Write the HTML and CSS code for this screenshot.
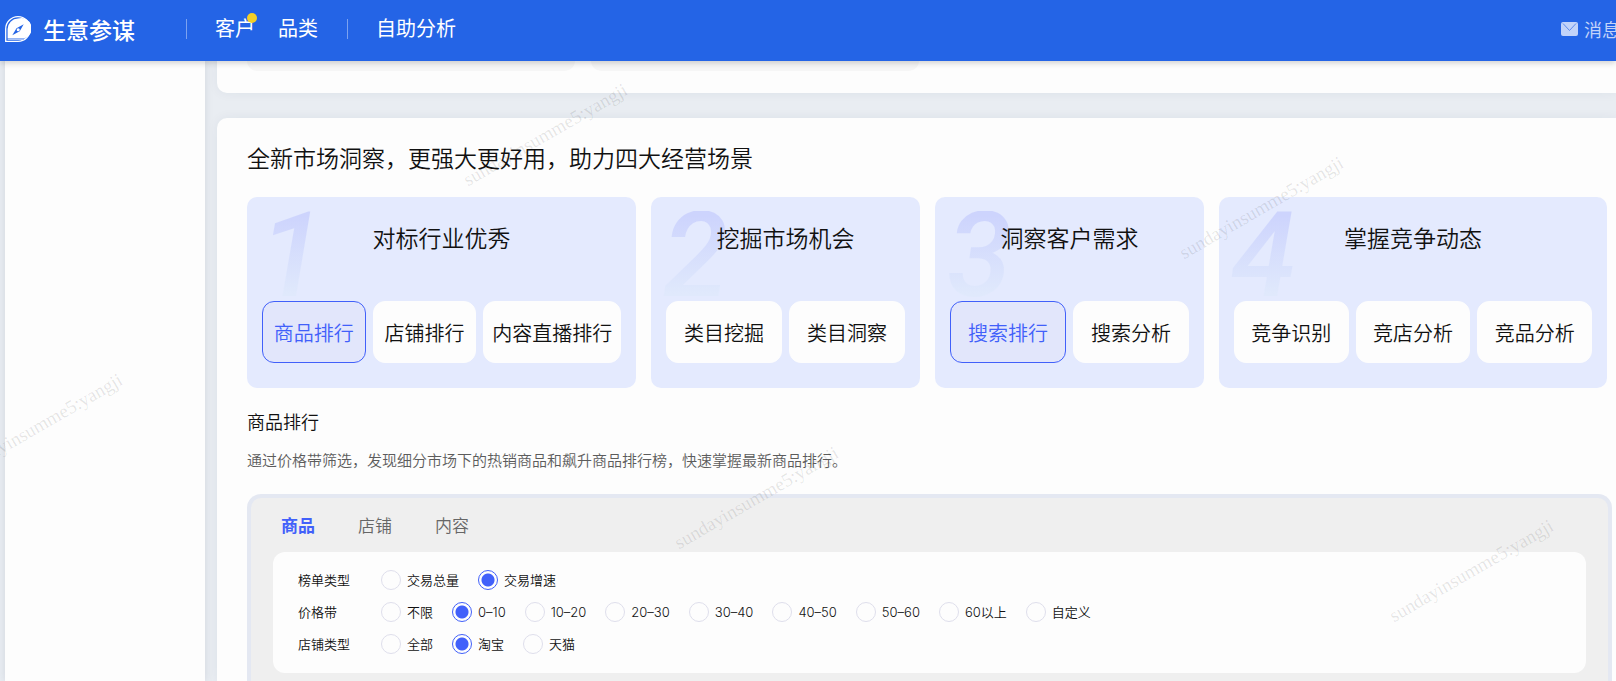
FILE: index.html
```html
<!DOCTYPE html>
<html lang="zh-CN">
<head>
<meta charset="utf-8">
<meta name="viewport" content="width=device-width, initial-scale=1">
<title>生意参谋</title>
<link rel="stylesheet" href="styles.css">
</head>
<body>
<div class="page">
  <header class="topbar">
    <a class="brand" href="#">
      <svg class="brand-logo" viewBox="0 0 26 26" aria-hidden="true">
        <path d="M13 .7A12.3 12.3 0 1 1 13 25.300H.7V13A12.300 12.300 0 0 1 13 .7Z" fill="none" stroke="#fff" stroke-width="1.300"/>
        <path d="M13 2.600A10.400 10.400 0 0 1 19.500 22.400H2.600V13A10.400 10.400 0 0 1 13 2.600Z" fill="#fff"/>
        <path d="M2.600 22.800H19V24H2.600Z" fill="#a9c2f6"/>
        <path d="M18.700 8.200 14.700 15.300 7.300 19.300 11.500 12.300Z" fill="#2464e6"/>
        <circle cx="13.200" cy="13.800" r="1.500" fill="#fff"/>
      </svg>
      <span>生意参谋</span>
    </a>
    <nav class="topnav">
      <span class="divider"></span>
      <a class="nav-link has-dot" href="#">客户</a>
      <a class="nav-link" href="#">品类</a>
      <span class="divider"></span>
      <a class="nav-link" href="#">自助分析</a>
    </nav>
    <a class="message" href="#">
      <svg class="message-icon" viewBox="0 0 17 14" aria-hidden="true">
        <rect width="17" height="14" rx="2" fill="#c2d3f9"/>
        <path d="M2 1.500 8.500 8.500 15 1.500" fill="none" stroke="#5c8aee" stroke-width="1"/>
      </svg>
      <span>消息</span>
    </a>
  </header>

  <div class="body">
    <aside class="sidebar"></aside>
    <main class="content">
      <section class="card previous">
        <div class="placeholder"></div>
        <div class="placeholder"></div>
      </section>

      <section class="card insight">
        <h1 class="headline">全新市场洞察，更强大更好用，助力四大经营场景</h1>
        <div class="scenes">
          <article class="scene">
            <span class="scene-no">1</span>
            <h2 class="scene-title">对标行业优秀</h2>
            <div class="scene-actions">
              <button class="action short active" type="button">商品排行</button>
              <button class="action short" type="button">店铺排行</button>
              <button class="action long" type="button">内容直播排行</button>
            </div>
          </article>
          <article class="scene">
            <span class="scene-no">2</span>
            <h2 class="scene-title">挖掘市场机会</h2>
            <div class="scene-actions">
              <button class="action" type="button">类目挖掘</button>
              <button class="action" type="button">类目洞察</button>
            </div>
          </article>
          <article class="scene">
            <span class="scene-no">3</span>
            <h2 class="scene-title">洞察客户需求</h2>
            <div class="scene-actions">
              <button class="action active" type="button">搜索排行</button>
              <button class="action" type="button">搜索分析</button>
            </div>
          </article>
          <article class="scene">
            <span class="scene-no">4</span>
            <h2 class="scene-title">掌握竞争动态</h2>
            <div class="scene-actions">
              <button class="action" type="button">竞争识别</button>
              <button class="action" type="button">竞店分析</button>
              <button class="action" type="button">竞品分析</button>
            </div>
          </article>
        </div>

        <h3 class="subhead">商品排行</h3>
        <p class="description">通过价格带筛选，发现细分市场下的热销商品和飙升商品排行榜，快速掌握最新商品排行。</p>

        <div class="panel">
          <div class="tabs">
            <button class="tab current" type="button">商品</button>
            <button class="tab" type="button">店铺</button>
            <button class="tab" type="button">内容</button>
          </div>
          <form class="filters">
            <div class="filter" role="radiogroup" aria-labelledby="f-board">
              <span class="filter-name" id="f-board">榜单类型</span>
              <label class="option"><input type="radio" name="board">交易总量</label>
              <label class="option"><input type="radio" name="board" checked>交易增速</label>
            </div>
            <div class="filter" role="radiogroup" aria-labelledby="f-price">
              <span class="filter-name" id="f-price">价格带</span>
              <label class="option"><input type="radio" name="price">不限</label>
              <label class="option"><input type="radio" name="price" checked>0–10</label>
              <label class="option"><input type="radio" name="price">10–20</label>
              <label class="option"><input type="radio" name="price">20–30</label>
              <label class="option"><input type="radio" name="price">30–40</label>
              <label class="option"><input type="radio" name="price">40–50</label>
              <label class="option"><input type="radio" name="price">50–60</label>
              <label class="option"><input type="radio" name="price">60以上</label>
              <label class="option"><input type="radio" name="price">自定义</label>
            </div>
            <div class="filter" role="radiogroup" aria-labelledby="f-shop">
              <span class="filter-name" id="f-shop">店铺类型</span>
              <label class="option"><input type="radio" name="shop">全部</label>
              <label class="option"><input type="radio" name="shop" checked>淘宝</label>
              <label class="option"><input type="radio" name="shop">天猫</label>
            </div>
          </form>
        </div>
      </section>
    </main>
  </div>

  <div class="watermarks" aria-hidden="true">
    <span class="mark mark-a">sundayinsumme5:yangji</span>
    <span class="mark mark-b">sundayinsumme5:yangji</span>
    <span class="mark mark-c">sundayinsumme5:yangji</span>
    <span class="mark mark-d">sundayinsumme5:yangji</span>
    <span class="mark mark-e">sundayinsumme5:yangji</span>
  </div>
</div>
</body>
</html>
```
FILE: styles.css
```css
* {
  box-sizing: border-box;
}

body,
h1,
h2,
h3,
p {
  margin: 0;
  font-weight: 350;
}

body {
  font-family: "Noto Sans CJK SC", sans-serif;
  color: #111;
  background: #e9edf2;
}

button {
  padding: 0;
  border: 0;
  background: none;
  font-family: inherit;
  font-weight: inherit;
  color: inherit;
  cursor: pointer;
}

a {
  color: inherit;
  text-decoration: none;
}

.page {
  position: relative;
  display: flex;
  flex-direction: column;
  min-height: 100vh;
  overflow: hidden;
}

/* Top bar */
.topbar {
  position: relative;
  z-index: 2;
  display: flex;
  align-items: center;
  padding: 0 0 4px 5px;
  height: 61px;
  color: #fff;
  background: #2464e6;
  box-shadow: 0 2px 6px rgba(0, 0, 0, 0.18);
  font-weight: 400;
  white-space: nowrap;
}

.brand {
  display: flex;
  align-items: center;
  gap: 12px;
  width: 181px;
  font-size: 23px;
  font-weight: 500;
  line-height: 32px;
}

.brand-logo {
  width: 26px;
  height: 26px;
}

.topnav {
  display: flex;
  align-items: center;
}

.divider {
  width: 1px;
  height: 20px;
  margin-right: 28px;
  background: #7ca2f0;
}

.nav-link {
  margin-right: 23px;
  padding-bottom: 2px;
  font-size: 20px;
  line-height: 28px;
}

.nav-link + .divider {
  margin-left: 6px;
}

.has-dot {
  position: relative;
}

.has-dot::after {
  content: "";
  position: absolute;
  top: -1px;
  right: -2px;
  width: 10px;
  height: 10px;
  border-radius: 50%;
  background: #f3cf26;
}

.message {
  display: flex;
  align-items: center;
  gap: 6px;
  margin-left: auto;
  margin-right: -4px;
  font-size: 18px;
  line-height: 28px;
  color: #c2d3f9;
}

.message-icon {
  width: 17px;
  height: 14px;
}

/* Columns */
.body {
  display: flex;
  flex: 1;
  gap: 12px;
  padding-left: 5px;
}

.sidebar {
  flex: none;
  width: 200px;
  background: #fdfdfd;
  box-shadow: 0 0 8px rgba(40, 50, 80, 0.12);
}

.content {
  display: flex;
  flex: 1;
  flex-direction: column;
  gap: 25px;
  min-width: 0;
}

.card {
  background: #fdfdfd;
  box-shadow: 0 0 12px rgba(40, 50, 80, 0.06);
}

.previous {
  display: flex;
  gap: 16px;
  padding: 0 30px 22px;
  border-radius: 0 0 0 10px;
}

.placeholder {
  width: 328px;
  height: 10px;
  border-radius: 0 0 10px 10px;
  background: #f6f6f6;
}

.insight {
  display: flex;
  flex: 1;
  flex-direction: column;
  padding: 23px 4px 0 30px;
  border-radius: 10px 0 0 0;
}

.headline {
  margin-bottom: 24px;
  font-size: 23px;
  line-height: 32px;
}

/* Scene cards */
.scenes {
  display: grid;
  grid-template-columns: 389fr 269fr 269fr 388fr;
  gap: 15px;
  margin-right: 5px;
}

.scene {
  position: relative;
  padding: 24px 15px 25px;
  border-radius: 10px;
  background: #e4eafe;
}

.scene-no {
  position: absolute;
  top: 14px;
  left: 12px;
  font-family: Roboto, sans-serif;
  font-size: 118px;
  font-style: italic;
  font-weight: 500;
  line-height: 90px;
  color: transparent;
  background: linear-gradient(#cdd4fd 5%, #e0e9fc 92%);
  background-clip: text;
  -webkit-background-clip: text;
}

.scene-title {
  position: relative;
  margin-bottom: 48px;
  font-size: 23px;
  line-height: 32px;
  text-align: center;
}

.scene-actions {
  position: relative;
  display: flex;
  gap: 7px;
}

.action {
  flex: 1 1 0;
  height: 62px;
  padding-top: 2px;
  border: 1px solid #fdfdfd;
  border-radius: 12px;
  background: #fdfdfd;
  font-size: 20px;
  line-height: 28px;
  white-space: nowrap;
}

.action.short {
  flex-grow: 3;
}

.action.long {
  flex-grow: 4;
}

.action.active {
  border-color: #4160fa;
  background: #e2e6fb;
  color: #4160fa;
}

.subhead {
  margin-top: 21px;
  font-size: 18px;
  line-height: 24px;
}

.description {
  margin: 17px 0 24px;
  font-size: 15px;
  line-height: 20px;
  color: #5c5c5c;
}

/* Ranking preview */
.panel {
  flex: 1;
  padding: 0 22px 8px;
  border: 4px solid #e4e8f2;
  border-bottom: 0;
  border-radius: 14px 14px 0 0;
  background: #efefef;
}

.tabs {
  display: flex;
  align-items: center;
  gap: 43px;
  height: 54px;
  padding-left: 8px;
}

.tab {
  font-size: 17px;
  line-height: 24px;
  color: #666;
}

.tab.current {
  font-weight: 700;
  color: #4160fa;
}

.filters {
  padding: 12px 25px 13px;
  border-radius: 12px;
  background: #fdfdfd;
}

.filter {
  display: flex;
  align-items: center;
  gap: 19px;
  height: 32px;
  font-family: Inter, "Noto Sans CJK SC", sans-serif;
  font-size: 13px;
  line-height: 20px;
}

.filter-name {
  width: 64px;
}

.option {
  display: flex;
  align-items: center;
  gap: 6px;
}

.option input {
  appearance: none;
  width: 20px;
  height: 20px;
  margin: 0;
  border: 1px solid #dfdfec;
  border-radius: 50%;
  background: #fdfdfd;
}

.option input:checked {
  border-color: #4160fa;
  background: radial-gradient(circle, #4160fa 6px, #fdfdfd 7px);
}

/* Account watermark repeated across the page */
.watermarks {
  position: absolute;
  inset: 0;
  z-index: 1;
  overflow: hidden;
  pointer-events: none;
}

.mark {
  position: absolute;
  font-family: "Liberation Serif", serif;
  font-size: 19px;
  line-height: 20px;
  color: rgba(0, 0, 0, 0.1);
  transform: rotate(-30deg);
  transform-origin: left bottom;
}

.mark-a { left: 470px; top: 170px; }
.mark-b { left: 1186px; top: 243px; }
.mark-c { left: -35px; top: 460px; }
.mark-d { left: 681px; top: 533px; }
.mark-e { left: 1396px; top: 606px; }
```
